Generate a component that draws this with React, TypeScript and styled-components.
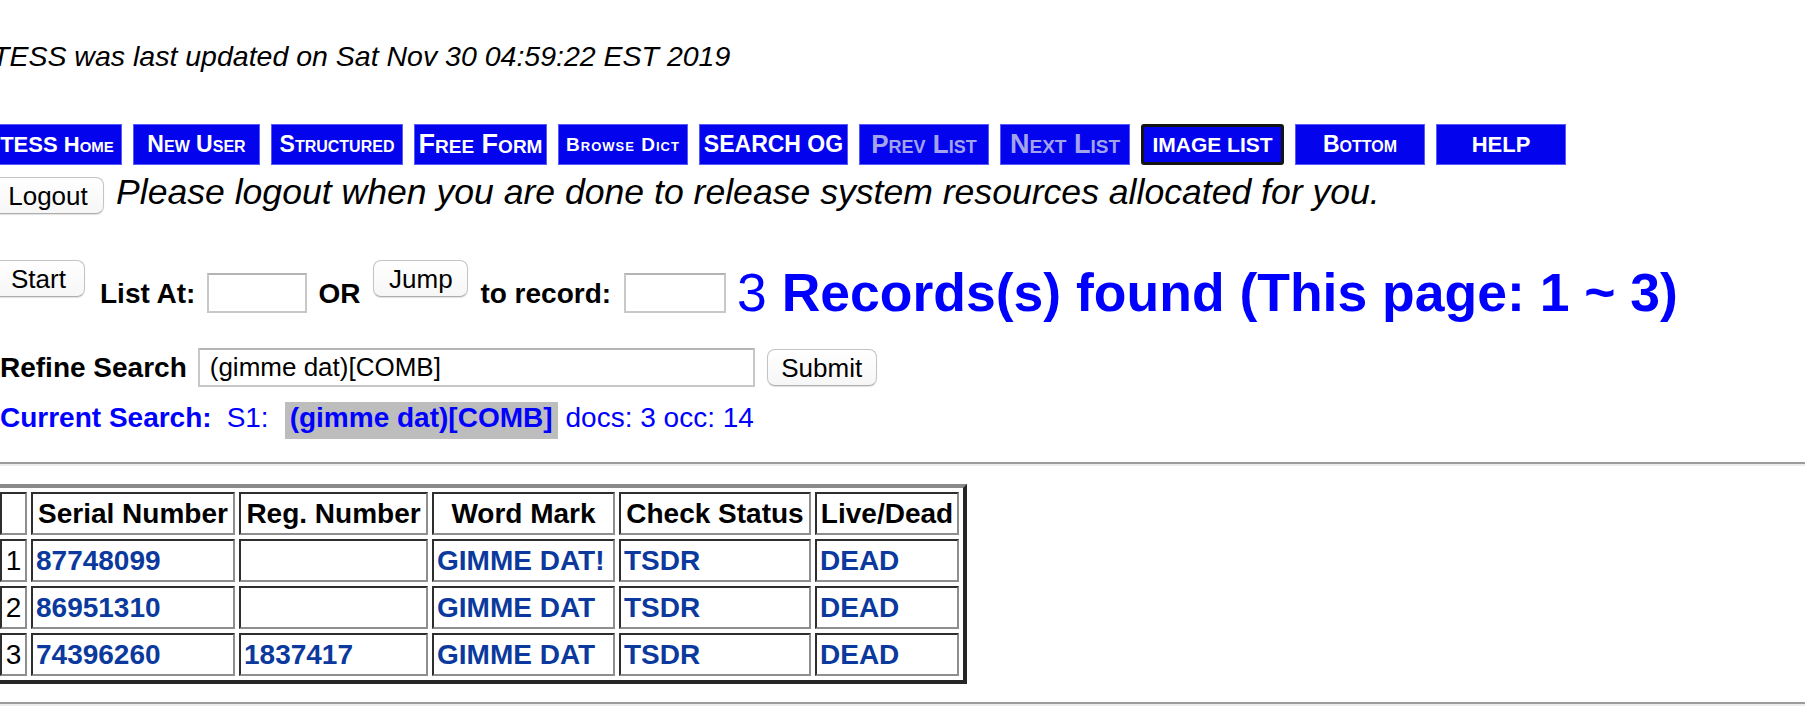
import React from "react";
import styled, { createGlobalStyle } from "styled-components";

//===============================
// @Data
//===============================
type NavItem = {
  label: string;
  width: number;
  size: number;
  caps?: boolean;
  spacing?: number;
  dim?: boolean;
  active?: boolean;
};

const NAV: NavItem[] = [
  { label: "TESS Home", width: 130, size: 22 },
  { label: "New User", width: 127, size: 23 },
  { label: "Structured", width: 132, size: 23 },
  { label: "Free Form", width: 133, size: 27 },
  { label: "Browse Dict", width: 130, size: 19, spacing: 1 },
  { label: "SEARCH OG", width: 149, size: 23, caps: true },
  { label: "Prev List", width: 130, size: 26, dim: true },
  { label: "Next List", width: 130, size: 27, dim: true },
  { label: "IMAGE LIST", width: 143, size: 21, caps: true, active: true },
  { label: "Bottom", width: 130, size: 23 },
  { label: "HELP", width: 130, size: 22, caps: true },
];

const COLUMNS = [
  { title: "", width: 27 },
  { title: "Serial Number", width: 204 },
  { title: "Reg. Number", width: 189 },
  { title: "Word Mark", width: 183 },
  { title: "Check Status", width: 192 },
  { title: "Live/Dead", width: 144 },
];

const RECORDS = [
  { serial: "87748099", reg: "", mark: "GIMME DAT!" },
  { serial: "86951310", reg: "", mark: "GIMME DAT" },
  { serial: "74396260", reg: "1837417", mark: "GIMME DAT" },
];

//===============================
// @Styled
//===============================
const GlobalStyle = createGlobalStyle`
  html, body {
    margin: 0;
    padding: 0;
    background: #fff;
    overflow: hidden;
  }
  body {
    font-family: "Liberation Sans", Arial, sans-serif;
    color: #000;
  }
`;

const Page = styled.div`
  margin-left: -8px;
  width: calc(100% + 16px);
`;

const Updated = styled.p`
  margin: 0;
  padding: 39px 0 0 0;
  height: 34px;
  line-height: 34px;
  font-size: 28.5px;
  font-style: italic;
`;

const NavBar = styled.div`
  display: flex;
  gap: 11px;
  margin-top: 51px;
  height: 41px;
`;

const NavButton = styled.div<{ $w: number; $size: number; $caps?: boolean; $spacing?: number; $dim?: boolean; $active?: boolean }>`
  box-sizing: border-box;
  width: ${(p) => p.$w}px;
  height: 41px;
  display: flex;
  align-items: center;
  justify-content: center;
  background: #0303ee;
  border: ${(p) => (p.$active ? "3px solid #141414" : "1px solid #5a5af6")};
  border-radius: ${(p) => (p.$active ? "3px" : "0")};
  color: ${(p) => (p.$dim ? "#a3a3ec" : "#fff")};
  font-weight: 700;
  font-size: ${(p) => p.$size}px;
  font-variant: ${(p) => (p.$caps ? "normal" : "small-caps")};
  letter-spacing: ${(p) => p.$spacing ?? 0}px;
  white-space: nowrap;
  overflow: hidden;
`;

const Row = styled.div<{ $top: number; $h: number; $indent?: number }>`
  display: flex;
  align-items: flex-start;
  margin-top: ${(p) => p.$top}px;
  height: ${(p) => p.$h}px;
  padding-left: ${(p) => p.$indent ?? 0}px;
  white-space: nowrap;
`;

const MacButton = styled.button<{ $w: number; $top?: number; $left?: number }>`
  box-sizing: border-box;
  width: ${(p) => p.$w}px;
  height: 37px;
  margin: ${(p) => p.$top ?? 0}px 0 0 ${(p) => p.$left ?? 0}px;
  padding: 0;
  background: linear-gradient(#ffffff, #f6f6f6);
  border: 1px solid #c4c4c4;
  border-bottom-color: #aeaeae;
  border-radius: 8px;
  box-shadow: 0 1px 1px rgba(0, 0, 0, 0.12);
  font-family: "Liberation Sans", Arial, sans-serif;
  font-size: 26px;
  color: #000;
  line-height: 1;
`;

const Notice = styled.span`
  margin-left: 12px;
  font-size: 35.6px;
  line-height: 36px;
  font-style: italic;
`;

const Label = styled.span<{ $top: number; $left: number }>`
  margin: ${(p) => p.$top}px 0 0 ${(p) => p.$left}px;
  font-size: 28px;
  line-height: 28px;
  font-weight: 700;
`;

const Box = styled.input<{ $w: number; $h: number; $top: number; $left: number }>`
  box-sizing: border-box;
  width: ${(p) => p.$w}px;
  height: ${(p) => p.$h}px;
  margin: ${(p) => p.$top}px 0 0 ${(p) => p.$left}px;
  padding: 0 10px;
  border: 2px solid #c8c8c8;
  border-top-color: #b4b4b4;
  background: #fff;
  font-family: "Liberation Sans", Arial, sans-serif;
  font-size: 26px;
  color: #000;
  outline: none;
`;

const Found = styled.span`
  margin: 6px 0 0 11px;
  font-size: 53.5px;
  line-height: 53.5px;
  color: #0000ff;
  b {
    font-weight: 700;
  }
`;

const SearchInfo = styled.span<{ $bold?: boolean; $left?: number }>`
  margin-left: ${(p) => p.$left ?? 0}px;
  font-size: 28px;
  line-height: 31px;
  font-weight: ${(p) => (p.$bold ? 700 : 400)};
  color: #0000ff;
`;

const Highlight = styled.span`
  margin-left: 16px;
  padding: 0 5px 6px;
  background: #bdbdbd;
  font-size: 28px;
  line-height: 31px;
  font-weight: 700;
  color: #0000ff;
`;

const Rule = styled.hr<{ $top: number }>`
  margin: ${(p) => p.$top}px 0 0 0;
  height: 0;
  border: none;
  border-top: 2px solid #9c9c9c;
  border-bottom: 2px solid #ececec;
`;

const Table = styled.table`
  margin-top: 18px;
  border-collapse: separate;
  border-spacing: 4px;
  table-layout: fixed;
  border: 4px solid;
  border-color: #8a8a8a #262626 #262626 #8a8a8a;
  font-size: 28px;
`;

const Cell = styled.td<{ $w?: number; $head?: boolean; $link?: boolean; $center?: boolean }>`
  box-sizing: border-box;
  width: ${(p) => (p.$w ? `${p.$w}px` : "auto")};
  height: 43px;
  padding: 0 3px;
  border: 2px solid;
  border-color: #2e2e2e #8e8e8e #8e8e8e #2e2e2e;
  text-align: ${(p) => (p.$head || p.$center ? "center" : "left")};
  font-weight: ${(p) => (p.$head || p.$link ? 700 : 400)};
  color: ${(p) => (p.$link ? "#0b399d" : "#000")};
  white-space: nowrap;
  overflow: hidden;
  line-height: 1;
`;

//===============================
// @Component
//===============================
const App: React.FC = () => {
  return (
    <Page>
      <GlobalStyle />
      <Updated>TESS was last updated on Sat Nov 30 04:59:22 EST 2019</Updated>

      <NavBar>
        {NAV.map((item) => (
          <NavButton
            key={item.label}
            $w={item.width}
            $size={item.size}
            $caps={item.caps}
            $spacing={item.spacing}
            $dim={item.dim}
            $active={item.active}
          >
            {item.label}
          </NavButton>
        ))}
      </NavBar>

      <Row $top={9} $h={40}>
        <MacButton $w={112} $top={3}>Logout</MacButton>
        <Notice>Please logout when you are done to release system resources allocated for you.</Notice>
      </Row>

      <Row $top={46} $h={60}>
        <MacButton $w={93}>Start</MacButton>
        <Label $top={20} $left={15}>List At:</Label>
        <Box $w={100} $h={40} $top={13} $left={12} />
        <Label $top={20} $left={11}>OR</Label>
        <MacButton $w={95} $left={13}>Jump</MacButton>
        <Label $top={20} $left={12}>to record:</Label>
        <Box $w={102} $h={40} $top={13} $left={13} />
        <Found>
          3 <b>Records(s) found (This page: 1 ~ 3)</b>
        </Found>
      </Row>

      <Row $top={28} $h={39} $indent={8}>
        <Label $top={6} $left={0}>Refine Search</Label>
        <Box $w={557} $h={39} $top={0} $left={11} defaultValue="(gimme dat)[COMB]" />
        <MacButton $w={110} $top={1} $left={12}>Submit</MacButton>
      </Row>

      <Row $top={15} $h={37} $indent={8}>
        <SearchInfo $bold>Current Search:</SearchInfo>
        <SearchInfo $left={15}>S1:</SearchInfo>
        <Highlight>(gimme dat)[COMB]</Highlight>
        <SearchInfo $left={8}>docs: 3 occ: 14</SearchInfo>
      </Row>

      <Rule $top={23} />

      <Table>
        <thead>
          <tr>
            {COLUMNS.map((c) => (
              <Cell as="th" key={c.width} $w={c.width} $head>
                {c.title}
              </Cell>
            ))}
          </tr>
        </thead>
        <tbody>
          {RECORDS.map((r, i) => (
            <tr key={r.serial}>
              <Cell $center>{i + 1}</Cell>
              <Cell $link>{r.serial}</Cell>
              <Cell $link>{r.reg}</Cell>
              <Cell $link>{r.mark}</Cell>
              <Cell $link>TSDR</Cell>
              <Cell $link>DEAD</Cell>
            </tr>
          ))}
        </tbody>
      </Table>

      <Rule $top={18} />
    </Page>
  );
};

export default App;
